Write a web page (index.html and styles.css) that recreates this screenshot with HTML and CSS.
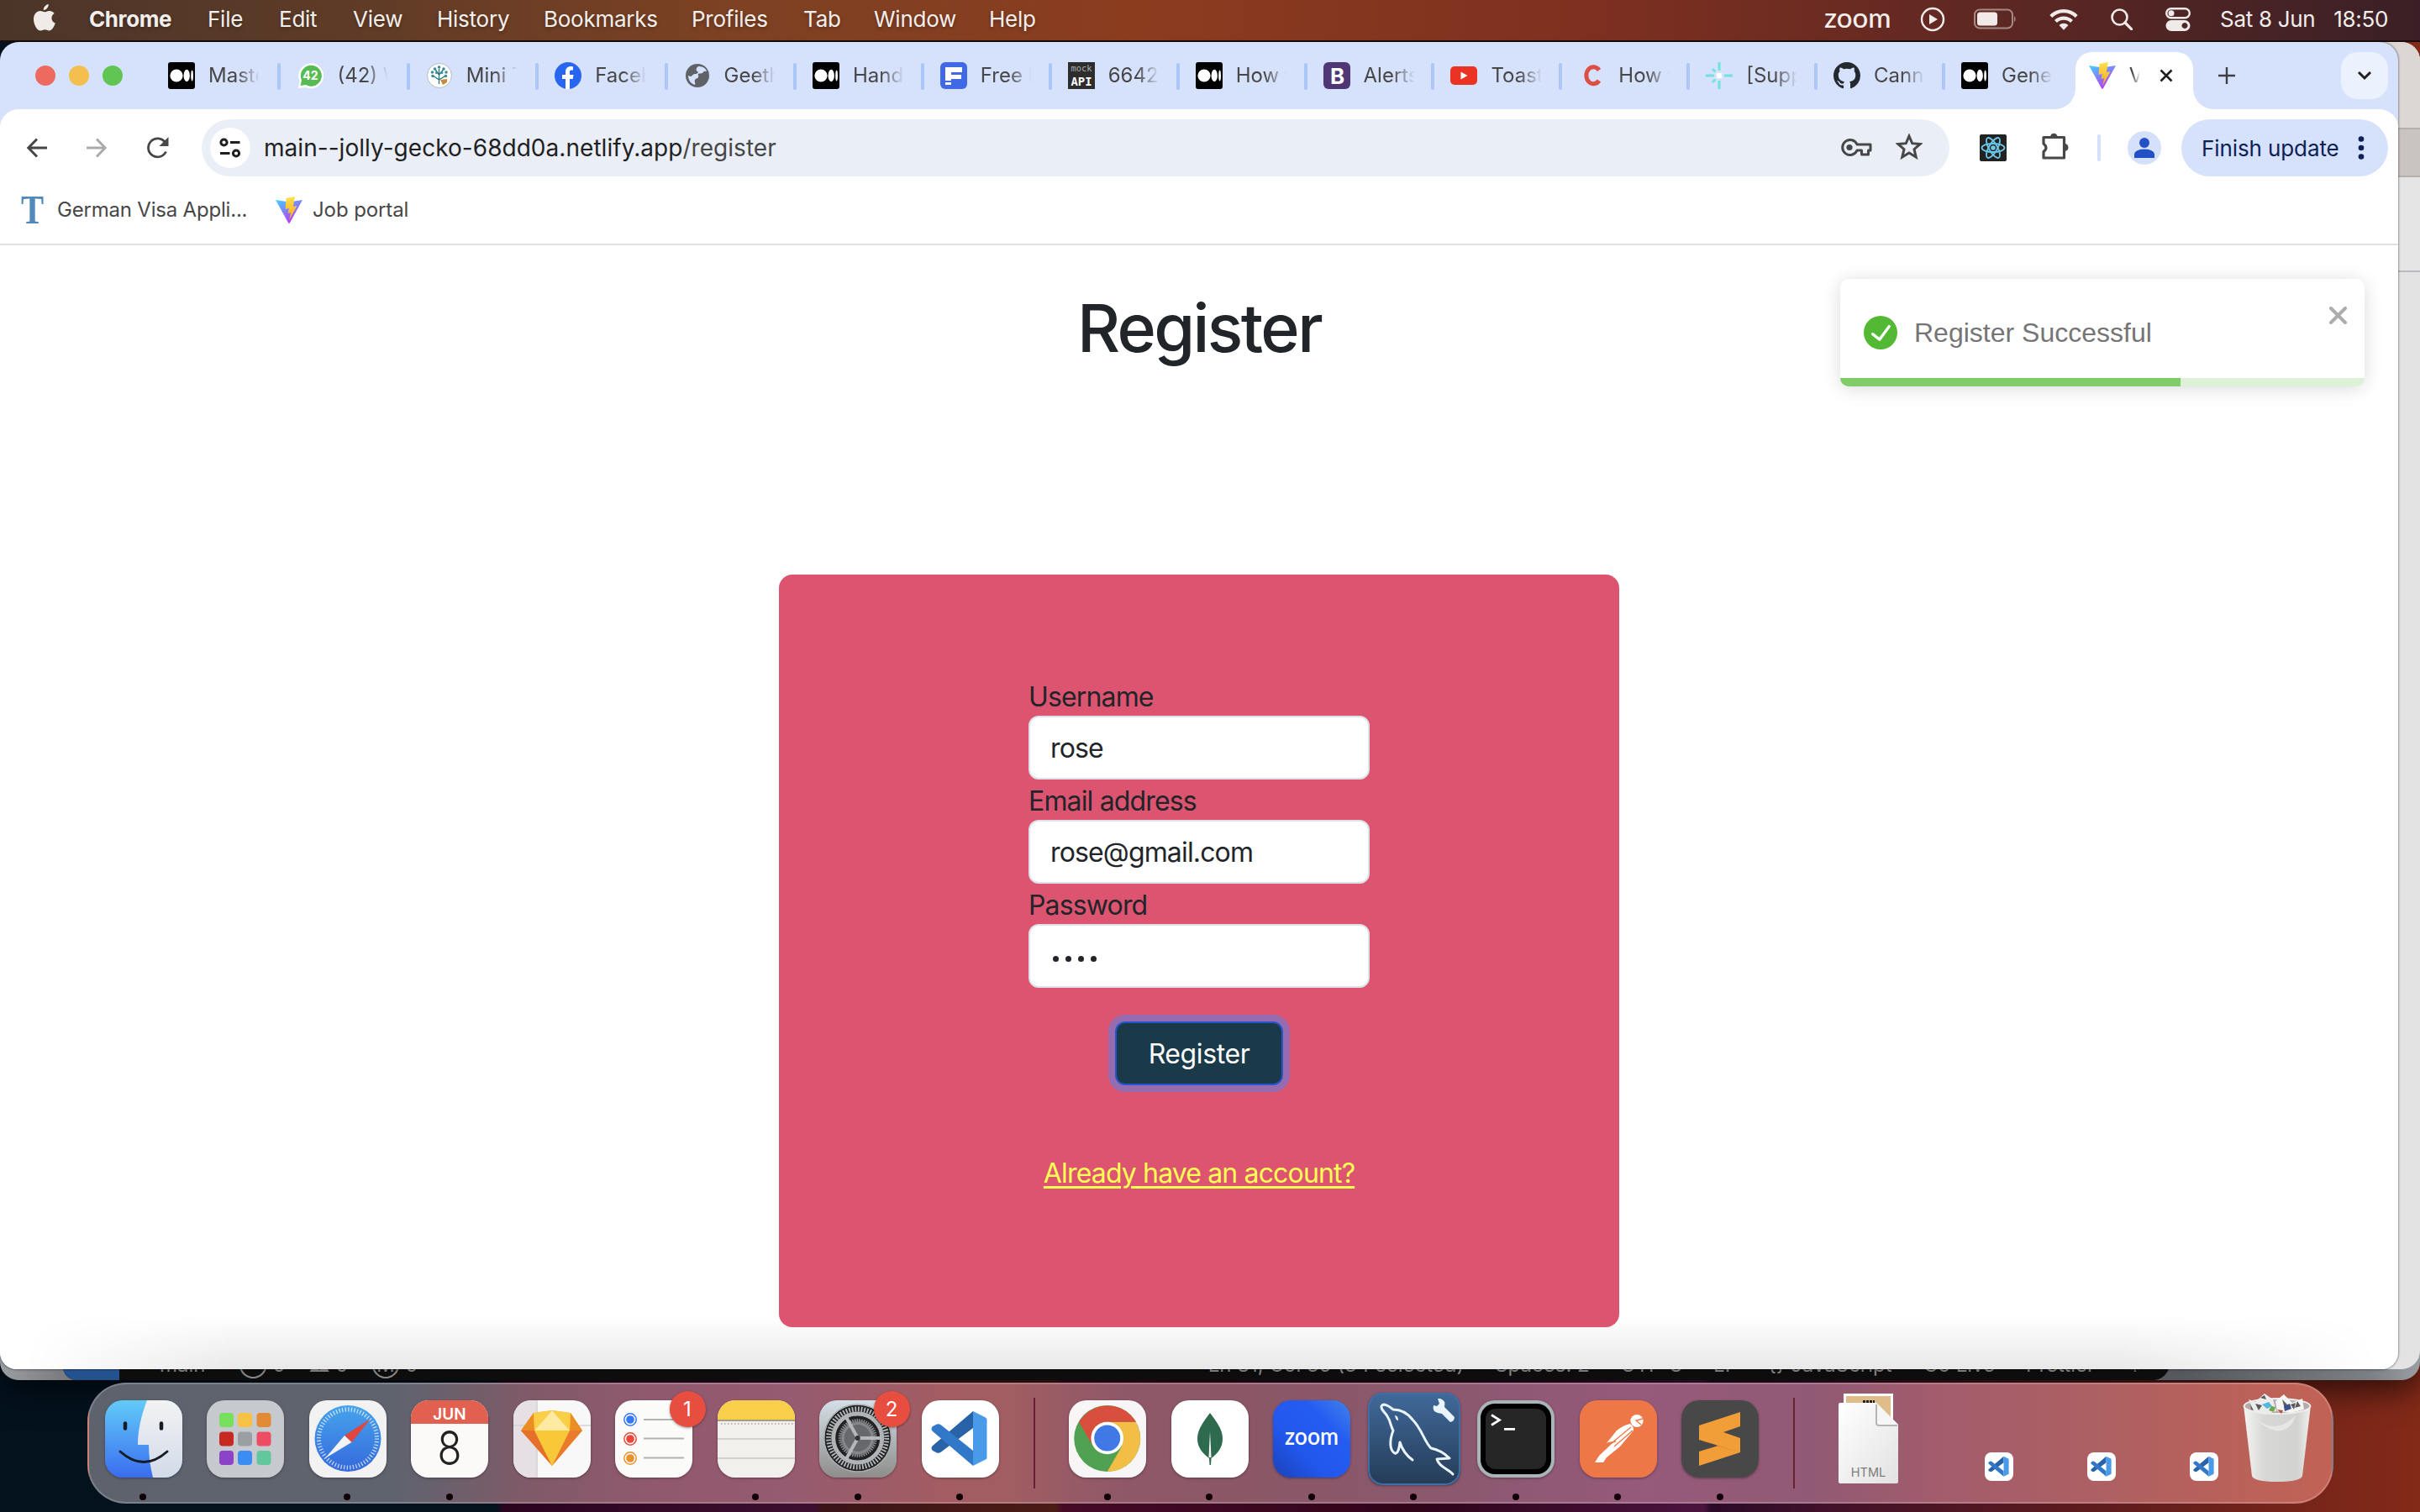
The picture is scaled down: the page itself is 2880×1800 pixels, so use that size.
FILE: index.html
```html
<!DOCTYPE html>
<html lang="en">
<head>
<meta charset="utf-8">
<title>Register</title>
<link rel="stylesheet" href="styles.css">
</head>
<body>
<svg class="defs" width="0" height="0" aria-hidden="true">
  <defs>
    <linearGradient id="vite-a" x1="0" y1="0" x2=".6" y2="1"><stop offset="0" stop-color="#41d1ff"/><stop offset="1" stop-color="#bd34fe"/></linearGradient>
    <linearGradient id="vite-b" x1="0" y1="0" x2="0" y2="1"><stop offset="0" stop-color="#ffe24d"/><stop offset="1" stop-color="#f5a623"/></linearGradient>
    <linearGradient id="finder-l" x1="0" y1="0" x2="0" y2="1"><stop offset="0" stop-color="#62cbf8"/><stop offset="1" stop-color="#3a6df0"/></linearGradient>
    <linearGradient id="finder-r" x1="0" y1="0" x2="0" y2="1"><stop offset="0" stop-color="#f2f2f3"/><stop offset="1" stop-color="#d2dbe8"/></linearGradient>
    <linearGradient id="safari-g" x1="0" y1="0" x2="0" y2="1"><stop offset="0" stop-color="#46a4ec"/><stop offset="1" stop-color="#3569dc"/></linearGradient>
    <linearGradient id="doc-g" x1="0" y1="0" x2="1" y2="1"><stop offset="0" stop-color="#fff"/><stop offset="1" stop-color="#e2e2e2"/></linearGradient>
    <linearGradient id="bin-g" x1="0" y1="0" x2="1" y2="0"><stop offset="0" stop-color="#f4f4f4"/><stop offset=".3" stop-color="#d8d8d6"/><stop offset=".8" stop-color="#d2d2d0"/><stop offset="1" stop-color="#efefef"/></linearGradient>
    <linearGradient id="sql-g" x1="0" y1="0" x2="0" y2="1"><stop offset="0" stop-color="#40699a"/><stop offset="1" stop-color="#253c57"/></linearGradient>
    <linearGradient id="zoom-g" x1="1" y1="0" x2="0" y2="1"><stop offset="0" stop-color="#4083e8"/><stop offset=".3" stop-color="#245cf2"/><stop offset=".65" stop-color="#2257ec"/><stop offset="1" stop-color="#1b42b8"/></linearGradient>
    <symbol id="medium" viewBox="0 0 32 32"><rect width="32" height="32" rx="3"/><ellipse cx="10" cy="16" rx="7.600" ry="7.600" fill="#fff"/><ellipse cx="22.200" cy="16" rx="3.700" ry="7.200" fill="#fff"/><ellipse cx="28.600" cy="16" rx="1.400" ry="6.600" fill="#fff"/></symbol>
    <symbol id="vite" viewBox="0 0 32 32"><path d="M0 4l16 2.600L32 4 16.900 31.200q-.9 1.200-1.800 0z" fill="url(#vite-a)"/><path d="M23 0L12.500 2l-.9 13 4.300-.9-1.300 6 3.600-1.200-2.200 9.600L25.500 11l-4.700 1z" fill="url(#vite-b)"/></symbol>
    <symbol id="vscode" viewBox="0 0 92 92"><path d="M61 13L13 54q-3 3 0 6l5 2.500q2 1 5-1L61 33z" fill="#2863a8"/><path d="M61 78L13 37q-3-3 0-6l5-2.500q2-1 5 1L61 60z" fill="#3278c8"/><path d="M61 13l15 7.500q1.500 1 1.500 2.500v45q0 2-1.500 2.500L61 78z" fill="#4a9aea"/></symbol>
  </defs>
</svg>

<div class="desktop">
  <header class="menubar">
    <svg class="apple" viewBox="0 0 26 32"><path d="M17.800 0c.2 3.500-2.700 7-6 7C11.500 3.700 14.500.4 17.800 0zM13.400 9.300c1.300 0 3-1.600 5.700-1.400 2.400.2 4.300 1.200 5.500 3-4.700 3-4 9.600 1.200 11.700-.9 3.400-3.900 8.900-7.100 9-2 0-2.800-1.300-5.200-1.300s-3.300 1.300-5.200 1.300C4.200 31.600 0 24.100 0 17.900c0-6.200 3.800-9.800 7.900-9.900 2.200 0 4.200 1.300 5.500 1.300z"/></svg>
    <nav class="menus"><b>Chrome</b><span>File</span><span>Edit</span><span>View</span><span>History</span><span>Bookmarks</span><span>Profiles</span><span>Tab</span><span>Window</span><span>Help</span></nav>
    <div class="status">
      <span class="zoomword">zoom</span>
      <svg class="st-play" viewBox="0 0 30 30"><circle cx="15" cy="15" r="13" fill="none" stroke="#f0ebe9" stroke-width="2.500"/><path d="M11 9l10 6-10 6z"/></svg>
      <svg class="st-batt" viewBox="0 0 52 26"><rect x="1" y="1.500" width="45" height="22" rx="6" fill="none" stroke="#f0ebe9" stroke-opacity=".5" stroke-width="2"/><rect x="4" y="4.500" width="24" height="16" rx="3.500"/><path d="M48 9q3.500 3.500 0 7.500z" fill-opacity=".5"/></svg>
      <svg class="st-wifi" viewBox="0 0 34 26"><g fill="none" stroke="#f0ebe9" stroke-width="4.200"><path d="M1.800 9.500a21.500 21.500 0 0 1 30.400 0"/><path d="M7.500 15.500a13.500 13.500 0 0 1 19 0"/></g><path d="M11.500 20a8 8 0 0 1 11 0L17 25.800z"/></svg>
      <svg class="st-search" viewBox="0 0 26 26"><circle cx="10.500" cy="10.500" r="9" fill="none" stroke="#f0ebe9" stroke-width="2.600"/><path d="M17 17l8 8" stroke="#f0ebe9" stroke-width="3.200" stroke-linecap="round"/></svg>
      <svg class="st-cc" viewBox="0 0 30 28"><rect x="1.200" y="1.200" width="27.600" height="11" rx="5.500" fill="none" stroke="#f0ebe9" stroke-width="2.400"/><circle cx="7" cy="6.700" r="3.500"/><path fill-rule="evenodd" d="M7 15h16a6.500 6.500 0 0 1 0 13H7a6.500 6.500 0 0 1 0-13zm16 3a3.500 3.500 0 1 0 .01 0z"/></svg>
      <span class="clock"><span>Sat 8 Jun</span><span>18:50</span></span>
    </div>
  </header>

  <div class="win-grey"></div>
  <div class="win-editor">
    <div class="remote"></div>
    <div class="statusline"><span>main*</span><span>⊗ 0</span><span>⚠ 0</span><span>Ⓜ 0</span></div>
    <div class="statusline right"><span>Ln 81, Col 35 (34 selected)</span><span>Spaces: 2</span><span>UTF-8</span><span>LF</span><span>{} JavaScript</span><span>Go Live</span><span>Prettier</span><span>♤</span></div>
  </div>
  <div class="win-light"><i></i><i></i><i></i></div>

  <main class="browser">
    <div class="tabstrip">
      <div class="lights"><i class="r"></i><i class="y"></i><i class="g"></i></div>
      <div class="tabs">
        <div class="tab"><svg><use href="#medium"/></svg><span>Mastering</span></div>
        <div class="tab"><svg viewBox="0 0 32 32"><path d="M2 31l1.500-8.500A15 15 0 1 1 11 30z" fill="#fff"/><path d="M4.500 28l1.500-6.500A12.500 12.500 0 1 1 11 27z" fill="#57bb54"/><text x="16.500" y="21" font-size="14" font-weight="700" text-anchor="middle" fill="#fff">42</text></svg><span>(42) WhatsApp</span></div>
        <div class="tab"><svg viewBox="0 0 32 32"><circle cx="16" cy="16" r="14.500" fill="#fff" stroke="#b9b9bc"/><g stroke="#22757c" stroke-width="1.300" fill="none"><path d="M15.500 26V8M15.500 21L8 16M15.500 21l8-5M15.500 15l-5-7M15.500 15l6-7"/></g><g fill="#3f8d92"><circle cx="15.500" cy="6" r="1.800"/><circle cx="10.500" cy="8" r="1.800"/><circle cx="21" cy="8" r="1.800"/><circle cx="7.500" cy="12" r="1.800"/><circle cx="24" cy="12" r="1.800"/><circle cx="8" cy="16.500" r="1.800"/><circle cx="23.500" cy="16.500" r="1.800"/><circle cx="12.500" cy="12.500" r="1.600"/><circle cx="18.800" cy="12.500" r="1.600"/></g><path d="M17 21l8-1 0 4-5 3z" fill="#c78a3c"/></svg><span>Mini Tree</span></div>
        <div class="tab"><svg viewBox="0 0 32 32"><circle cx="16" cy="16" r="16" fill="#2866f2"/><path d="M13 32V20H9v-5h4v-3.500C13 7.500 15.500 5 19.500 5c1.200 0 2.500.3 2.500.3v4.200h-2C18.200 9.500 18 10.600 18 12v3h4.500l-.8 5H18v12z" fill="#fff"/></svg><span>Facebook</span></div>
        <div class="tab"><svg viewBox="0 0 32 32"><circle cx="16" cy="16" r="14" fill="#5f6368"/><path d="M17 5c-3 2-3 5-1 6s0 3-3 3-3 3-5 3l-3-1c0 6 4 10 8 11 1-2-1-4 0-6s3-1 4-3-1-3 0-4 5 0 6-2 3-1 4-1c-1-4-5-6-10-6z" fill="#d6e1fc"/></svg><span>Geeth</span></div>
        <div class="tab"><svg><use href="#medium"/></svg><span>Handling</span></div>
        <div class="tab"><svg viewBox="0 0 32 32"><rect width="32" height="32" rx="6" fill="#4169e6"/><path d="M6 6h20v6H13v3h12v5H13v2H6zM6 24h7v3H6z" fill="#fff"/></svg><span>Free Icons</span></div>
        <div class="tab"><svg viewBox="0 0 32 32"><rect width="32" height="32" fill="#2d2d2d"/><text class="mono" x="16" y="11" font-size="10" textLength="25" lengthAdjust="spacingAndGlyphs" text-anchor="middle" fill="#aaa">mock</text><text class="mono" x="16" y="28" font-size="13.500" font-weight="700" textLength="25" lengthAdjust="spacingAndGlyphs" text-anchor="middle" fill="#fff">API</text></svg><span>6642b</span></div>
        <div class="tab"><svg><use href="#medium"/></svg><span>How to</span></div>
        <div class="tab"><svg viewBox="0 0 32 32"><rect width="32" height="32" rx="6" fill="#4f3776"/><text x="16.500" y="25.500" font-size="26" font-weight="700" text-anchor="middle" fill="#fff">B</text></svg><span>Alerts ·</span></div>
        <div class="tab"><svg viewBox="0 0 32 32"><rect y="5" width="32" height="22" rx="5" fill="#ea3323"/><path d="M12.500 11.500v9l8-4.500z" fill="#fff"/></svg><span>Toast me</span></div>
        <div class="tab"><svg viewBox="0 0 32 32"><path d="M25 9.500A8.500 10 0 1 0 25 22" fill="none" stroke="#db4f45" stroke-width="5"/></svg><span>How to</span></div>
        <div class="tab"><svg viewBox="0 0 32 32"><g stroke="#6fe3de" stroke-width="3"><path d="M16 0v10M16 22v10M0 16h10M22 16h10M8 8l3.500 3.500M8 24l3.500-3.500"/></g><path d="M13 13h6v6h-6z" fill="#fff"/></svg><span>[Support]</span></div>
        <div class="tab"><svg viewBox="0 0 16 16"><path fill="#24292f" d="M8 0C3.580 0 0 3.580 0 8c0 3.540 2.290 6.530 5.470 7.590.4.070.55-.17.55-.38v-1.490c-2.010.37-2.530-.49-2.690-.94-.09-.23-.48-.94-.82-1.130-.28-.15-.68-.52-.01-.53.63-.01 1.080.58 1.230.82.72 1.210 1.870.87 2.330.66.070-.52.28-.87.51-1.070-1.780-.2-3.640-.89-3.640-3.950 0-.87.31-1.590.82-2.150-.08-.2-.36-1.020.08-2.120 0 0 .67-.21 2.200.82a7.600 7.600 0 0 1 4 0c1.530-1.040 2.200-.82 2.200-.82.44 1.100.16 1.920.08 2.120.51.56.82 1.270.82 2.150 0 3.070-1.870 3.750-3.650 3.950.29.25.54.73.54 1.480v2.200c0 .21.150.46.550.38A8.010 8.010 0 0 0 16 8c0-4.420-3.580-8-8-8z"/></svg><span>Cannot</span></div>
        <div class="tab"><svg><use href="#medium"/></svg><span>General</span></div>
        <div class="tab active"><svg><use href="#vite"/></svg><span>Vite</span><svg class="close" viewBox="0 0 16 16"><path d="M1.500 1.500l13 13M14.500 1.500l-13 13" stroke="#1f1f1f" stroke-width="2.600"/></svg></div>
      </div>
      <svg class="plus" viewBox="0 0 20 20"><path d="M10 0v20M0 10h20" stroke="#3c4043" stroke-width="2.400"/></svg>
      <div class="tabsearch"><svg viewBox="0 0 18 12"><path d="M2 2l7 7 7-7" fill="none" stroke="#1f1f1f" stroke-width="3"/></svg></div>
    </div>

    <div class="toolbar">
      <svg class="tb-back" viewBox="0 0 24 24"><path d="M24 12H2M12 1.500L1.800 12 12 22.500" fill="none" stroke="#474747" stroke-width="3"/></svg>
      <svg class="tb-fwd" viewBox="0 0 24 24"><path d="M0 12h22M12 1.500L22.200 12 12 22.500" fill="none" stroke="#ababab" stroke-width="3"/></svg>
      <svg class="tb-reload" viewBox="0 0 26 26"><path d="M22.500 17.500A11 11 0 1 1 21.500 6.500L24 9.500" fill="none" stroke="#474747" stroke-width="2.800"/><path d="M25.500 0v11h-11z" fill="#474747"/></svg>
      <div class="omnibox">
        <div class="site"><svg viewBox="0 0 26 24"><g fill="none" stroke="#1f1f1f" stroke-width="3"><circle cx="5.500" cy="5.500" r="3.600"/><path d="M13 5.500h11.500M1 18.500h11.500"/><circle cx="20" cy="18.500" r="3.600"/></g></svg></div>
        <span class="url">main--jolly-gecko-68dd0a.netlify.app<em>/register</em></span>
        <svg class="key" viewBox="0 0 37 22"><path d="M19 7h16v7h-2.500v5h-8v-5H19a9 9 0 1 1 0-7z" fill="none" stroke="#474747" stroke-width="3" stroke-linejoin="round"/><circle cx="10" cy="10.500" r="3.600" fill="#474747"/></svg>
        <svg class="star" viewBox="0 0 32 31"><path d="M16 3l3.700 8.700 9.500.8-7.200 6.200 2.200 9.300-8.200-5-8.200 5L10 18.700l-7.200-6.200 9.500-.8z" fill="none" stroke="#474747" stroke-width="3"/></svg>
      </div>
      <svg class="react" viewBox="0 0 32 32"><rect width="32" height="32" rx="2" fill="#222"/><g fill="none" stroke="#6cc8e8" stroke-width="1.800"><ellipse cx="16" cy="16" rx="13.500" ry="5"/><ellipse cx="16" cy="16" rx="13.500" ry="5" transform="rotate(60 16 16)"/><ellipse cx="16" cy="16" rx="13.500" ry="5" transform="rotate(120 16 16)"/></g><circle cx="16" cy="16" r="2.800" fill="#6cc8e8"/></svg>
      <svg class="puzzle" viewBox="0 0 34 34"><path d="M4 6.500h24.500V31H4v-7.500q6-4.500 0-9.500z" fill="none" stroke="#474747" stroke-width="3.200" stroke-linejoin="round"/><path d="M12 6a4.300 4.300 0 0 1 8.600 0zM29 14a4.500 4.500 0 0 1 0 9z" fill="#474747"/></svg>
      <i class="tb-sep"></i>
      <svg class="avatar" viewBox="0 0 40 40"><circle cx="20" cy="20" r="20" fill="#d5e0fb"/><circle cx="20" cy="14" r="6" fill="#2350c4"/><path d="M8 32v-4q0-6 12-6.500 12 .5 12 6.500v4z" fill="#2350c4"/></svg>
      <div class="finish"><span>Finish update</span><svg viewBox="0 0 8 28"><circle cx="4" cy="3.500" r="3.300"/><circle cx="4" cy="14" r="3.300"/><circle cx="4" cy="24.500" r="3.300"/></svg></div>
    </div>

    <div class="bookmarks">
      <span class="tee">T</span><span class="bm1">German Visa Appli...</span>
      <svg><use href="#vite"/></svg><span class="bm2">Job portal</span>
    </div>

    <section class="page">
      <h1>Register</h1>
      <form class="card">
        <label>Username</label>
        <div class="field">rose</div>
        <label>Email address</label>
        <div class="field">rose@gmail.com</div>
        <label>Password</label>
        <div class="field pw"><i></i><i></i><i></i><i></i></div>
        <button type="button">Register</button>
        <a href="#">Already have an account?</a>
      </form>
      <div class="shade"></div>
      <div class="toast">
        <div class="toast-body">
          <svg viewBox="0 0 24 24"><path fill="#53b935" d="M12 0a12 12 0 1 0 12 12A12.014 12.014 0 0 0 12 0zm6.927 8.200l-6.845 9.289a1.011 1.011 0 0 1-1.430.188l-4.888-3.908a1 1 0 1 1 1.250-1.562l4.076 3.261 6.227-8.451a1 1 0 1 1 1.610 1.183z"/></svg>
          <span>Register Successful</span>
          <svg class="x" viewBox="0 0 21 21"><path d="M2 2l17 17M19 2L2 19" stroke="#acacac" stroke-width="4" stroke-linecap="round"/></svg>
        </div>
        <div class="progress"><i></i></div>
      </div>
    </section>
  </main>

  <footer class="dock">
    <div class="group">
      <div class="app run"><svg class="ic" viewBox="0 0 92 92"><rect width="92" height="92" fill="url(#finder-l)"/><path d="M50 0C43 18 39 36 39 53h13c0 14 2 27 5 39h35V0z" fill="url(#finder-r)"/><g fill="none" stroke="#161c26" stroke-linecap="round"><path d="M24 27.500v6M67 27.500v6" stroke-width="4.500"/><path d="M18 61q28 25 56 0" stroke-width="3"/></g></svg></div>
      <div class="app"><svg class="ic" viewBox="0 0 92 92"><rect width="92" height="92" fill="#c6c9ce"/><g><rect x="15" y="15" width="17" height="17" rx="4" fill="#76e05c"/><rect x="37" y="15" width="17" height="17" rx="4" fill="#f6c243"/><rect x="59.500" y="15" width="17" height="17" rx="4" fill="#e38a36"/><rect x="15" y="37.500" width="17" height="17" rx="4" fill="#c5291f"/><rect x="37" y="37.500" width="17" height="17" rx="4" fill="#9a9fa3"/><rect x="59.500" y="37.500" width="17" height="17" rx="4" fill="#ed4c63"/><rect x="15" y="60" width="17" height="17" rx="4" fill="#8d43c8"/><rect x="37" y="60" width="17" height="17" rx="4" fill="#3b8df4"/><rect x="59.500" y="60" width="17" height="17" rx="4" fill="#62c79d"/></g></svg></div>
      <div class="app run"><svg class="ic" viewBox="0 0 92 92"><rect width="92" height="92" fill="#f2f2f2"/><circle cx="46" cy="45.500" r="39.500" fill="url(#safari-g)"/><circle cx="46" cy="45.500" r="34.500" fill="none" stroke="#fff" stroke-opacity=".75" stroke-width="5" stroke-dasharray="1.200 2.413"/><path d="M73 22L50.500 50 42 42z" fill="#e2463a"/><path d="M19 69L42 42l8.500 8z" fill="#f3f3f3"/></svg></div>
      <div class="app run"><svg class="ic" viewBox="0 0 92 92"><rect width="92" height="92" fill="#fbfaf8"/><rect width="92" height="28" fill="#e2604f"/><text x="46" y="22.500" font-size="19" font-weight="600" text-anchor="middle" fill="#fff">JUN</text><text x="46" y="77" font-size="56" font-weight="300" textLength="29" lengthAdjust="spacingAndGlyphs" text-anchor="middle" fill="#222">8</text></svg></div>
      <div class="app"><svg class="ic" viewBox="0 0 92 92"><rect width="92" height="92" fill="#f8f8f8"/><path d="M0 0h28v92H0z" fill="#e6dfe3"/><path d="M28 0v92M0 30h92" stroke="#d4d2d4" stroke-width="1.500"/><path d="M24 15l22-3 22 3 14 21-36 42L9 36z" fill="#f4a62c"/><path d="M9 36h16l21 42z" fill="#e5702b"/><path d="M82 36H67L46 78z" fill="#ea7b2c"/><path d="M24 15L9 36h16zM68 15l14 21H67z" fill="#ec8d24"/><path d="M46 12L24 15l1 21zM46 12l22 3-1 21z" fill="#f8cf46"/><path d="M46 12L25 36h42z" fill="#fdeaa0"/><path d="M25 36h42L46 78z" fill="#f8c838"/></svg></div>
      <div class="app"><svg class="ic" viewBox="0 0 92 92"><rect width="92" height="92" fill="#fbfbf9"/><g fill="none" stroke-width="1.500"><circle cx="18" cy="23" r="7.200" stroke="#3478f6"/><circle cx="18" cy="46" r="7.200" stroke="#e9483a"/><circle cx="18" cy="69" r="7.200" stroke="#e8912d"/></g><circle cx="18" cy="23" r="4.800" fill="#3478f6"/><circle cx="18" cy="46" r="4.800" fill="#e9483a"/><circle cx="18" cy="69" r="4.800" fill="#e8912d"/><path d="M34 23h48M34 45.500h48M34 68.500h48" stroke="#b3b3b3" stroke-width="1.800"/></svg><b class="badge">1</b></div>
      <div class="app run"><svg class="ic" viewBox="0 0 92 92"><rect width="92" height="92" fill="#f1f0ec"/><rect width="92" height="23" fill="#f8cf4a"/><path d="M0 24h92" stroke="#a59c87" stroke-width="2"/><path d="M4 28h86" stroke="#bbb" stroke-width="2" stroke-dasharray="1.500 2.500"/><path d="M0 46h92M0 69h92" stroke="#d3d2cf" stroke-width="1.800"/></svg></div>
      <div class="app run"><svg class="ic gearbg" viewBox="0 0 92 92"><circle cx="45.700" cy="45" r="39.500" fill="#1f2123"/><circle cx="45.700" cy="45" r="34.500" fill="none" stroke="#b4b8ba" stroke-width="6" stroke-dasharray="1.800 1.813"/><circle cx="45.700" cy="45" r="29" fill="none" stroke="#b0b4b6" stroke-width="5"/><circle cx="45.700" cy="45" r="21" fill="#55565a" stroke="#85888b" stroke-width="4" stroke-dasharray="1.500 1.200"/><circle cx="45.700" cy="45" r="17.500" fill="#66686a" stroke="#85888b" stroke-width="3"/><path d="M45.700 45h28M45.700 45L32 20M45.700 45L32 70" stroke="#b4b8ba" stroke-width="4"/><circle cx="45.700" cy="45" r="3" fill="#333"/><circle cx="45.700" cy="45" r="40" fill="none" stroke="#a9adaf" stroke-width="1.500"/></svg><b class="badge">2</b></div>
      <div class="app run"><svg class="ic white" viewBox="0 0 92 92"><use href="#vscode"/></svg></div>
    </div>
    <i class="sep"></i>
    <div class="group">
      <div class="app run"><svg class="ic" viewBox="0 0 92 92"><rect width="92" height="92" fill="#f8f5f6"/><circle cx="45.700" cy="45.500" r="39.500" fill="#51a153"/><path d="M45.700 25.700h34a39.500 39.500 0 0 1-34 59.300L63 55z" fill="#f3be45"/><path d="M12 26a39.500 39.500 0 0 1 68-.3H46L29 55z" fill="#d94f3d"/><circle cx="45.700" cy="45" r="19.300" fill="#fff"/><circle cx="45.700" cy="45" r="15.500" fill="#4079e6"/></svg></div>
      <div class="app run"><svg class="ic white" viewBox="0 0 92 92"><path d="M46 15C36 28 31 36 31 46c0 10 6 17 14 23l.5 8h1.500l.5-8c8-6 13.500-13 13.500-23C61 36 56 28 46 15z" fill="#2d6a4e"/><path d="M46 37l1.500 31h-3z" fill="#fff"/></svg></div>
      <div class="app run"><svg class="ic" viewBox="0 0 92 92"><rect width="92" height="92" fill="url(#zoom-g)"/><text class="zoomtxt" x="46" y="53" font-size="28" textLength="64" lengthAdjust="spacingAndGlyphs" text-anchor="middle" fill="#fff">zoom</text></svg></div>
      <div class="app run"><svg class="ic big" viewBox="0 0 110 110"><rect width="110" height="110" fill="url(#sql-g)"/><rect x="1" y="1" width="108" height="108" rx="17" fill="none" stroke="#3f6ea6" stroke-width="2"/><g fill="none" stroke="#eaf4fd" stroke-width="3" stroke-linejoin="round" stroke-linecap="round"><path d="M53 80Q42 72 38 59c-1 9-3 14-6 13-6-3-7-14-2-27-3-5-3-11-7-17-3-5-8-8-7-12 2-4 8-1 14 4 9 0 16 3 23 12 11 11 14 26 22 34 10 2 17 7 22 12l-15 1c2 9 14 12 19 18"/></g><path d="M32 27q4 0 4 6-3 0-4-6z" fill="#eaf4fd"/><path d="M78 15q-2 7 5 9l5 1 10 10q5-1 5-6L91 17q2-8-5-10l-3 0 2 6-3 3z" fill="#eaf4fd"/></svg></div>
      <div class="app run"><svg class="ic" viewBox="0 0 92 92"><rect width="92" height="92" fill="#a9b4b9"/><rect x="4" y="4" width="84" height="84" rx="17" fill="#000"/><rect x="10" y="10" width="72" height="72" rx="12" fill="#262626"/><path d="M17 17.500l9.500 6-9.500 6M32 34.300h13" fill="none" stroke="#fff" stroke-width="2.800"/></svg></div>
      <div class="app run"><svg class="ic" viewBox="0 0 92 92"><rect width="92" height="92" fill="#ee7748"/><circle cx="68" cy="24.500" r="7.600" fill="#fff"/><path d="M60 28q5 4 4 8L48 55 32 68l-4 6H18l5-8 16-15 3-2-10 2 12-15q9-7 16-8z" fill="#fff"/><path d="M61 32L38 51M63 36L41 55M33 51l10-2M75 22l-8 2 6 5" fill="none" stroke="#ee7748" stroke-width="1.300"/></svg></div>
      <div class="app run"><svg class="ic" viewBox="0 0 92 92"><rect width="92" height="92" fill="#484848"/><path d="M21 61l49-15v16L21 78z" fill="#f29e38"/><path d="M41 54l29 8V46z" fill="#d58527"/><path d="M21 30l49-16v17l-20 7 20 7v17L21 47z" fill="#f29e38"/></svg></div>
    </div>
    <i class="sep"></i>
    <div class="group">
      <div class="app"><svg class="file" viewBox="0 0 92 110"><path d="M17 1h59v60H17z" fill="#fff"/><path d="M20 4h53v50H20z" fill="#dfbd8b"/><path d="M40 11h14" stroke="#222" stroke-width="4" stroke-dasharray="3 1"/><path d="M13 12h43l26 26v68q0 2-2 2H13q-2 0-2-2V14q0-2 2-2z" fill="url(#doc-g)"/><path d="M56 12l26 26H59q-3 0-3-3z" fill="#f6f6f6"/><path d="M56 14v22q0 3 3 3h22" fill="none" stroke="#b5b5b5" stroke-width="2"/><text x="46.500" y="100" font-size="14.500" text-anchor="middle" fill="#7d7d7d">HTML</text></svg></div>
      <div class="app"><svg class="mini" viewBox="0 0 92 92"><use href="#vscode"/></svg></div>
      <div class="app"><svg class="mini" viewBox="0 0 92 92"><use href="#vscode"/></svg></div>
      <div class="app"><svg class="mini" viewBox="0 0 92 92"><use href="#vscode"/></svg></div>
      <div class="app"><svg class="file" viewBox="0 0 92 110"><path d="M6 15l10 84q2 7 30 7t30-7l10-84z" fill="url(#bin-g)"/><ellipse cx="46" cy="16" rx="39.500" ry="9" fill="#b8aaaa" stroke="#eee" stroke-width="2"/><path d="M12 8l8 3 11-10 10 7 4 14-14 4-13-4z" fill="#ececec"/><path d="M44 10l10-8 10 10 12-5 2 13-16 4-16-2z" fill="#f4f4f4"/><path d="M20 13l8 2-4 6zM52 8l6 6-3 5zM70 10l4 6-7 2zM26 6l5-3 2 5zM14 14l4 7-3-1zM62 14l6-2-2 8z" fill="#5b5b5e"/><path d="M28 14l8-3 4 5-6 3z" fill="#52b8da"/><path d="M54 16l7-3 2 6-8 3z" fill="#3c518c"/><path d="M39 16l5 1-2 6-6-2z" fill="#6da64c"/><path d="M46 20l7 1-2 4z" fill="#b7533a"/><path d="M22 32q24 18 46-5-6 20-24 18-12-2-22-13z" fill="#eee" fill-opacity=".7"/></svg></div>
    </div>
  </footer>
</div>
</body>
</html>
```
FILE: styles.css
```css
* { box-sizing: border-box; }
body { margin: 0; font-family: Inter, "Liberation Sans", sans-serif; color: #212529; }
svg { display: block; flex: none; }
i, em { font-style: normal; }
.defs { position: absolute; }
.mono { font-family: "DejaVu Sans Mono", monospace; }

.desktop {
  position: relative; width: 2880px; height: 1800px; overflow: hidden;
  background: linear-gradient(90deg, #04121e 0 590px, #2b0420 600px, #3d0f30 970px, #3b1418 978px, #4b1c16 1255px, #460a26 1265px, #30041a 1700px, #4a1440 2028px, #2a0a28 2036px, #40102a 2160px, #5e1c1c 2500px, #842a18 2880px);
}

/* menu bar */
.menubar {
  position: relative; height: 50px; display: flex; align-items: center;
  padding: 0 38px 3px 40px; color: #f3efec; font-size: 26px;
  background: linear-gradient(90deg, #4b3529, #5e3b27 400px, #7c4123 850px, #8b3c1f 1350px, #7e3020 1900px, #5c2723 2400px, #3a2026 2880px);
  border-bottom: 2px solid #1c0c0c;
}
.menubar svg { fill: #f0ebe9; }
.apple { width: 26px; height: 32px; margin-top: -3px; }
.menus { margin-left: 40px; display: grid; grid-template-columns: 141px 85px 88px 100px 127px 176px 133px 84px 137px 80px; letter-spacing: -0.25px; text-shadow: 0 2px 4px rgba(0,0,0,.3); white-space: nowrap; }
.menus b { font-weight: 700; letter-spacing: -0.4px; }
.status { margin-left: auto; display: flex; align-items: center; }
.zoomword { font: 500 33px/34px Lato, sans-serif; letter-spacing: 0; width: 82px; margin-top: -5px; }
.st-play { width: 30px; height: 30px; margin-left: 32px; }
.st-batt { width: 52px; height: 26px; margin-left: 34px; }
.st-wifi { width: 34px; height: 26px; margin-left: 38px; }
.st-search { width: 26px; height: 26px; margin-left: 39px; }
.st-cc { width: 30px; height: 28px; margin-left: 39px; }
.clock { margin-left: 35px; width: 200px; display: flex; justify-content: space-between; letter-spacing: -0.3px; white-space: nowrap; }

/* windows stacked behind the browser */
.win-grey { position: absolute; left: 0; top: 1500px; width: 2880px; height: 143px; border-radius: 0 0 22px 22px; background: linear-gradient(90deg, #9b9ea2, #77797d 80px, #55585c 2600px, #7b8086 2820px, #9a9da1); box-shadow: 0 10px 40px rgba(0,0,0,.7); }
.win-editor { position: absolute; left: 75px; top: 1600px; width: 2507px; height: 43px; border-radius: 0 0 20px 16px; background: #0d0d0d; overflow: hidden; display: flex; align-items: center; color: #858585; font-size: 24px; }
.remote { width: 67px; height: 43px; background: #24528f; flex: none; }
.statusline { display: flex; gap: 28px; padding: 6px 0 0 48px; white-space: nowrap; }
.statusline.right { margin-left: auto; gap: 37px; padding-right: 30px; }
.win-light { position: absolute; left: 2700px; top: 50px; width: 180px; height: 1580px; border-radius: 0 22px 22px 0; overflow: hidden; background: #e3e3e3; display: flex; flex-direction: column; }
.win-light i { background: #dcd7d4; height: 104px; border-bottom: 2px solid #b5b0ad; }
.win-light i + i { background: #c9c4c1; height: 57px; }
.win-light i + i + i { background: #e6e5e5; height: 113px; border-color: #b9bac0; }

/* browser window */
.browser { position: absolute; left: 0; top: 50px; width: 2854px; height: 1580px; border-radius: 22px 22px 20px 20px; overflow: hidden; background: #d6e1fc; display: flex; flex-direction: column; box-shadow: 0 0 3px rgba(0,0,0,.7); }
.tabstrip { height: 80px; flex: none; display: flex; align-items: center; padding: 0 12px 0 42px; }
.lights { display: flex; gap: 16px; width: 142px; }
.lights i { width: 24px; height: 24px; border-radius: 50%; }
.lights .r { background: #ec6a5e; }
.lights .y { background: #f4bf4f; }
.lights .g { background: #61c554; }
.tabs { display: flex; align-self: stretch; }
.tab { width: 151.900px; display: flex; align-items: center; padding-left: 16px; position: relative; }
.tab:nth-child(-n+5) { width: 153.400px; }
.tab svg { width: 32px; height: 32px; }
.tab span { margin-left: 16px; width: 62px; overflow: hidden; white-space: nowrap; font-size: 24px; margin-top: -1px; color: #474747; -webkit-mask-image: linear-gradient(90deg, #000 55%, transparent 98%); mask-image: linear-gradient(90deg, #000 55%, transparent 98%); }
.tab:not(.active):not(:nth-child(15))::after { content: ""; position: absolute; right: 3px; top: 25px; width: 4px; height: 32px; border-radius: 2px; background: #aac7f8; }
.tab.active { width: 140px; height: 68px; align-self: flex-end; background: #fff; border-radius: 20px 20px 0 0; padding: 0 0 12px 16px; }
.tab.active::before, .tab.active::after { content: ""; position: absolute; bottom: 0; width: 24px; height: 24px; }
.tab.active::before { left: -24px; background: radial-gradient(circle at 0 0, transparent 23.500px, #fff 24px); }
.tab.active::after { right: -24px; background: radial-gradient(circle at 100% 0, transparent 23.500px, #fff 24px); }
.tab.active span { width: 12px; -webkit-mask-image: linear-gradient(90deg, #000 30%, transparent 110%); mask-image: linear-gradient(90deg, #000 30%, transparent 110%); }
.tab.active .close { width: 16px; height: 16px; margin-left: 24px; }
.plus { width: 20px; height: 20px; margin-left: 30px; }
.tabsearch { margin-left: auto; width: 56px; height: 56px; border-radius: 20px; background: #ebf1fd; display: flex; align-items: center; justify-content: center; }
.tabsearch svg { width: 18px; height: 12px; }

.toolbar { height: 92px; flex: none; background: #fff; border-radius: 22px 22px 0 0; display: flex; align-items: center; padding: 0 12px 0 32px; }
.tb-back, .tb-fwd { width: 24px; height: 24px; }
.tb-fwd { margin-left: 47px; }
.tb-reload { width: 26px; height: 26px; margin-left: 48px; }
.omnibox { margin-left: 39px; width: 2080px; height: 68px; border-radius: 34px; background: #eaeef7; display: flex; align-items: center; }
.site { margin-left: 10px; width: 48px; height: 48px; border-radius: 50%; background: #fff; display: flex; align-items: center; justify-content: center; }
.site svg { width: 26px; height: 24px; }
.url { margin-left: 16px; font-size: 28px; color: #1f1f1f; letter-spacing: 0.04px; }
.url em { color: #474747; }
.key { width: 37px; height: 22px; margin-left: auto; }
.star { width: 32px; height: 31px; margin: -4px 32px 0 28px; }
.react { width: 32px; height: 32px; margin-left: 36px; }
.puzzle { width: 34px; height: 34px; margin: -4px 0 0 40px; }
.tb-sep { width: 4px; height: 32px; border-radius: 2px; background: #d5e0fb; margin-left: 34px; }
.avatar { width: 40px; height: 40px; margin-left: 32px; }
.finish { margin-left: 24px; width: 246px; height: 68px; border-radius: 34px; background: #d6e1fc; color: #0d2158; font-size: 26px; display: flex; align-items: center; justify-content: space-between; padding: 0 28px 0 24px; letter-spacing: -0.1px; white-space: nowrap; }
.finish svg { width: 8px; height: 28px; fill: #0d2158; }

.bookmarks { height: 70px; flex: none; background: #fff; border-bottom: 2px solid #e1e1e1; display: flex; align-items: center; padding: 0 0 12px 25px; font-size: 24px; color: #474747; white-space: nowrap; }
.tee { font: 700 49px/36px "Liberation Serif", serif; color: #5289bd; width: 28px; transform: scaleX(.83); transform-origin: 0 50%; }
.bm1 { margin: -2px 0 0 15px; width: 227px; letter-spacing: -0.2px; }
.bm2 { margin-top: -2px; letter-spacing: -0.1px; }
.bookmarks svg { width: 32px; height: 32px; margin: 0 12px 0 33px; }

/* page content */
.page { flex: 1; background: #fff; position: relative; display: flex; flex-direction: column; align-items: center; padding-top: 50px; }
h1 { margin: 0; font-weight: 500; font-size: 79px; line-height: 96px; letter-spacing: -2.6px; }
.card { margin-top: 246px; width: 1000px; height: 896px; border-radius: 16px; background: #dc5470; padding-top: 120px; display: flex; flex-direction: column; align-items: center; font-size: 32px; line-height: 48px; letter-spacing: -0.85px; position: relative; z-index: 1; }
.card label, .field { width: 406px; }
.card label { padding-top: 2px; height: 48px; }
.field { height: 76px; background: #fff; border: 2px solid #dee2e6; border-radius: 12px; padding: 13px 24px 0; }
.pw { display: flex; align-items: center; gap: 8px; padding: 12px 24px 12px 27px; }
.pw i { width: 7px; height: 7px; border-radius: 50%; background: #212529; margin-top: 6px; }
.card button { margin-top: 40px; width: 200px; height: 76px; padding-top: 3px; border: 2px solid #2356c9; border-radius: 12px; background: #1a3a4a; color: #fff; font: inherit; letter-spacing: -0.4px; box-shadow: 0 0 0 8px rgba(80,130,240,.5); }
.card a { margin-top: 81px; color: #ffff54; text-underline-offset: 4px; text-decoration-thickness: 3px; }
.shade { position: absolute; left: 0; right: 0; bottom: 0; height: 64px; background: linear-gradient(#fff0, rgba(0,0,0,.09)); -webkit-mask-image: linear-gradient(90deg, transparent 30px, #000 280px, #000 2520px, transparent 2830px); mask-image: linear-gradient(90deg, transparent 30px, #000 280px, #000 2520px, transparent 2830px); }
.toast { position: absolute; left: 2190px; top: 40px; width: 624px; height: 128px; border-radius: 10px; background: #fff; overflow: clip; box-shadow: 0 2px 20px rgba(0,0,0,.1), 0 4px 30px rgba(0,0,0,.05); display: flex; flex-direction: column; }
.toast-body { flex: 1; display: flex; align-items: center; padding: 10px 21px 0 28px; font: 32px "Liberation Sans", sans-serif; color: #757575; }
.toast-body svg { width: 40px; height: 40px; }
.toast-body span { margin-left: 20px; }
.toast-body .x { width: 21px; height: 21px; margin: -42px 0 0 auto; }
.progress { height: 10px; background: #dcf1d6; }
.progress i { display: block; width: 405px; height: 10px; background: #7fcc69; }

/* dock */
.dock { position: absolute; left: 104px; top: 1646px; width: 2673px; height: 144px; border-radius: 46px; border: 2px solid rgba(255,255,255,.2); display: flex; justify-content: center; background: linear-gradient(90deg, #5d626d, #5f636e 370px, #805a68 520px, #91596e 680px, #955b70 830px, #a35d62 1020px, #a05d62 1100px, #8f5868 1230px, #8a5767 1400px, #8c5870 1650px, #965a7a 1850px, #915a74 2050px, #a25c6c 2200px, #ae6062 2400px, #c26254 2673px); background-clip: border-box; }
.group { display: flex; }
.app { width: 121.500px; position: relative; display: flex; flex-direction: column; align-items: center; height: 140px; padding-top: 19px; }
.group:last-child .app { width: 121.800px; }
.ic { width: 92px; height: 92px; border-radius: 21px; box-shadow: 0 1px 3px rgba(0,0,0,.35); }
.white { background: #fff; }
.gearbg { background: linear-gradient(#d3dfe6, #8e8d8b); }
.ic.big { width: 110px; height: 110px; margin-top: -9px; border-radius: 17px; }
.run::after { content: ""; position: absolute; left: 56px; top: 130px; width: 8px; height: 8px; border-radius: 50%; background: #100008; }
.badge { position: absolute; left: 79px; top: 8px; width: 43px; height: 43px; border-radius: 50%; background: #e84e40; color: #fff; font-size: 24px; font-weight: 400; line-height: 43px; text-align: center; box-shadow: 0 1px 3px rgba(0,0,0,.4); }
.sep { width: 2px; height: 108px; margin: 16px 26px 0; background: #672034; }
.zoomtxt { font-family: Lato, sans-serif; font-weight: 600; }
.file { width: 92px; height: 110px; margin-top: -9px; }
.mini { width: 34px; height: 34px; border-radius: 8px; background: #fff; margin: 62px 0 0 69px; }
```
